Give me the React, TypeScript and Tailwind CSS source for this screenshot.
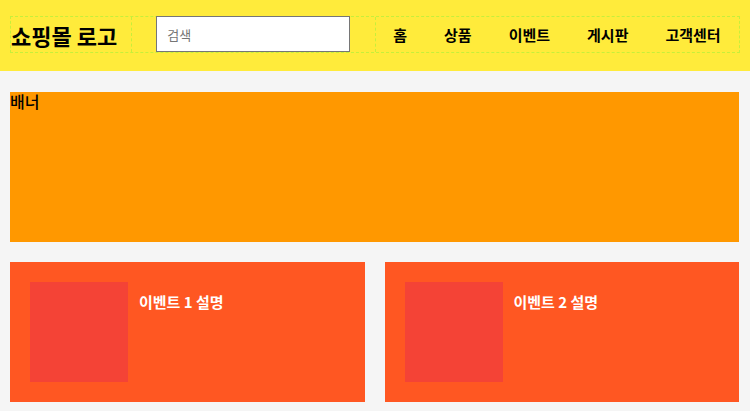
const navItems = ["홈", "상품", "이벤트", "게시판", "고객센터"];

const events = [
  { id: 1, title: "이벤트 1 설명" },
  { id: 2, title: "이벤트 2 설명" },
];

const App = () => {
  return (
    <div
      className="min-h-[411px] bg-[#f5f5f5] text-black"
      style={{ fontFamily: '"Noto Sans CJK KR", "Noto Sans", sans-serif' }}
    >
      <header className="h-[71px] bg-[#ffeb3b] pt-[16px] pl-[10px] pr-[10px]">
        <div className="flex h-[37px] items-stretch border border-dashed border-[#c6ef3a]">
          <div className="flex items-center border-r border-dashed border-[#c6ef3a] pr-[14px]">
            <h1 className="text-[22px] font-bold leading-none">쇼핑몰 로고</h1>
          </div>
          <div className="ml-[24px] flex items-start">
            <input
              type="text"
              placeholder="검색"
              className="-mt-px h-[36px] w-[194px] border border-[#767676] bg-white px-[10px] text-[13px] placeholder:text-[#757575] outline-none"
            />
          </div>
          <nav className="ml-[25px] flex flex-1 items-center border-l border-dashed border-[#c6ef3a]">
            <ul className="flex w-full items-center gap-[37px] pl-[17px]">
              {navItems.map((item) => (
                <li key={item} className="list-none text-[15px] font-bold leading-none">
                  {item}
                </li>
              ))}
            </ul>
          </nav>
        </div>
      </header>

      <main className="pt-[21px] pl-[10px] pr-[11px] pb-[9px]">
        <section className="h-[150px] bg-[#ff9800]">
          <p className="text-[16px] font-medium leading-[18px]">배너</p>
        </section>

        <section className="mt-[20px] grid grid-cols-2 gap-[20px]">
          {events.map((ev) => (
            <div key={ev.id} className="flex h-[140px] bg-[#ff5722] p-[20px]">
              <div className="h-[100px] w-[98px] shrink-0 bg-[#f44336]" />
              <h3 className="ml-[11px] mt-[10px] text-[15px] font-bold leading-[20px] text-white">
                {ev.title}
              </h3>
            </div>
          ))}
        </section>
      </main>
    </div>
  );
};

export default App;
